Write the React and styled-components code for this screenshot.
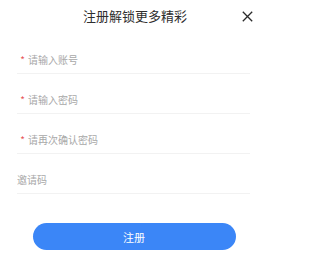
import React from 'react';
import styled, { createGlobalStyle } from 'styled-components';

const GlobalStyle = createGlobalStyle`
  html, body {
    margin: 0;
    padding: 0;
    background: #fff;
  }
  body {
    font-family: "Noto Sans CJK SC", "Noto Sans", sans-serif;
  }
`;

const fields = [
  { placeholder: '请输入账号', required: true, type: 'text' },
  { placeholder: '请输入密码', required: true, type: 'password' },
  { placeholder: '请再次确认密码', required: true, type: 'password' },
  { placeholder: '邀请码', required: false, type: 'text' },
];

const App = () => {
  return (
    <>
      <GlobalStyle />
      <Panel>
        <Header>
          <span />
          <Title>注册解锁更多精彩</Title>
          <CloseButton aria-label='关闭'>
            <svg width='11' height='11' viewBox='0 0 11 11'>
              <path
                d='M0.8 0.8 L10.2 10.2 M10.2 0.8 L0.8 10.2'
                stroke='#2b2b2b'
                strokeWidth='1.3'
                fill='none'
              />
            </svg>
          </CloseButton>
        </Header>
        <Form>
          {fields.map((field) => (
            <Field key={field.placeholder}>
              {field.required && <Star>*</Star>}
              <Input type={field.type} placeholder={field.placeholder} />
            </Field>
          ))}
          <SubmitButton type='button'>注册</SubmitButton>
        </Form>
      </Panel>
    </>
  );
};

export default App;

const Panel = styled.div`
  width: 270px;
  height: 259px;
  background: #fff;
`;

const Header = styled.div`
  display: grid;
  grid-template-columns: 1fr auto 1fr;
  align-items: center;
  padding: 6px 0 8px;
  height: 20px;
`;

const Title = styled.h1`
  margin: 0;
  font-size: 13px;
  font-weight: 400;
  line-height: 20px;
  color: #2e2e2e;
`;

const CloseButton = styled.button`
  justify-self: end;
  margin-right: 17px;
  padding: 0;
  border: none;
  background: none;
  display: flex;
  cursor: pointer;
`;

const Form = styled.form`
  display: flex;
  flex-direction: column;
`;

const Field = styled.label`
  display: flex;
  align-items: center;
  height: 14px;
  margin: 0 20px 0 17px;
  padding: 19px 0 6px;
  border-bottom: 1px solid #f2f2f2;
`;

const Star = styled.span`
  width: 11px;
  text-align: center;
  font-size: 10px;
  line-height: 14px;
  color: #e8565a;
`;

const Input = styled.input`
  flex: 1;
  min-width: 0;
  border: none;
  outline: none;
  padding: 0;
  background: transparent;
  font-family: inherit;
  font-size: 10px;
  line-height: 14px;
  color: #333;

  &::placeholder {
    color: #a8a8a8;
  }
`;

const SubmitButton = styled.button`
  align-self: center;
  margin: 29px 0 0 -2px;
  width: 203px;
  height: 27px;
  border: none;
  border-radius: 14px;
  background: #3b86f7;
  color: #fff;
  font-family: inherit;
  font-size: 11px;
  cursor: pointer;
`;
